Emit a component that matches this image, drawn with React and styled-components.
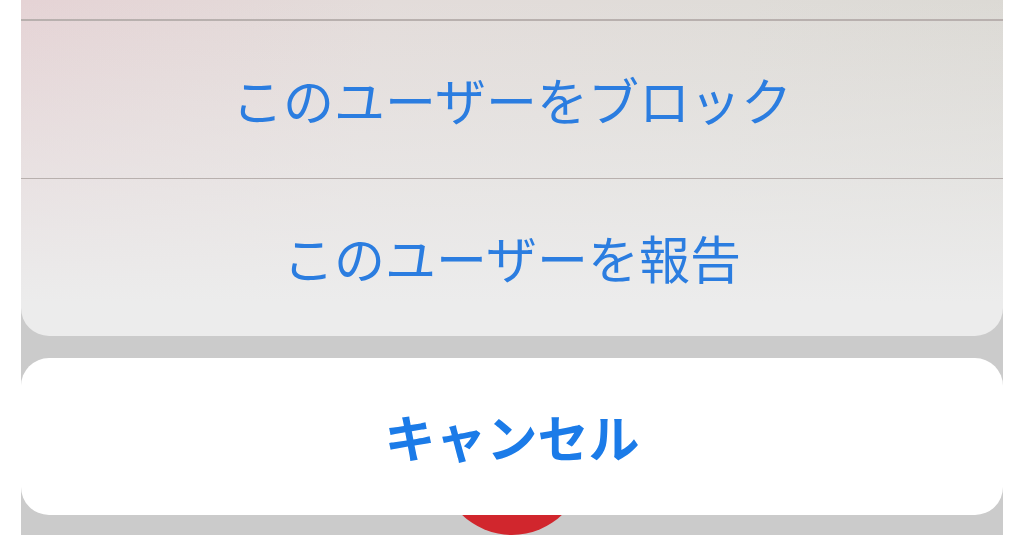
import React from "react";
import styled, { createGlobalStyle } from "styled-components";

const Global = createGlobalStyle`
  html, body { margin: 0; padding: 0; background: #ffffff; }
  body { font-family: "Noto Sans CJK JP", "Noto Sans", sans-serif; }
`;

const Page = styled.div`
  width: 1024px;
  height: 537px;
  padding: 0 21px 2px 21px;
  box-sizing: border-box;
  background: #ffffff;
`;

const Backdrop = styled.div`
  position: relative;
  height: 535px;
  background: #cbcbcb;
  overflow: hidden;
  display: flex;
  flex-direction: column;
`;

const RedBadge = styled.div`
  position: absolute;
  left: 419px;
  top: 391px;
  width: 144px;
  height: 144px;
  border-radius: 50%;
  background: #d1262d;
`;

const ActionGroup = styled.div`
  position: relative;
  z-index: 1;
  border-radius: 0 0 28px 28px;
  overflow: hidden;
  background:
    linear-gradient(to bottom, rgba(236, 236, 236, 0) 0%, rgba(236, 236, 236, 0.6) 55%, #ececec 90%),
    linear-gradient(100deg, #e5d3d5 0%, #e3dcda 35%, #dfdcd8 70%, #dbd9d4 100%);
  display: flex;
  flex-direction: column;
`;

const Row = styled.div`
  height: ${(p) => p.$h || 157}px;
  display: flex;
  align-items: center;
  justify-content: center;
  color: #2b7de0;
  font-size: 51px;
  font-weight: 400;
  line-height: 1;
`;

const Separator = styled.div`
  height: 1.5px;
  background: #b8b0ae;
`;

const CancelButton = styled.div`
  position: relative;
  z-index: 1;
  margin-top: 22px;
  height: 157px;
  border-radius: 28px;
  background: #ffffff;
  display: flex;
  align-items: center;
  justify-content: center;
  color: #1b7be8;
  font-size: 51px;
  font-weight: 700;
  line-height: 1;
`;

export default function App() {
  return (
    <>
      <Global />
      <Page>
        <Backdrop>
          <RedBadge />
          <ActionGroup>
            <Row $h={19} />
            <Separator />
            <Row>このユーザーをブロック</Row>
            <Separator />
            <Row>このユーザーを報告</Row>
          </ActionGroup>
          <CancelButton>キャンセル</CancelButton>
        </Backdrop>
      </Page>
    </>
  );
}
